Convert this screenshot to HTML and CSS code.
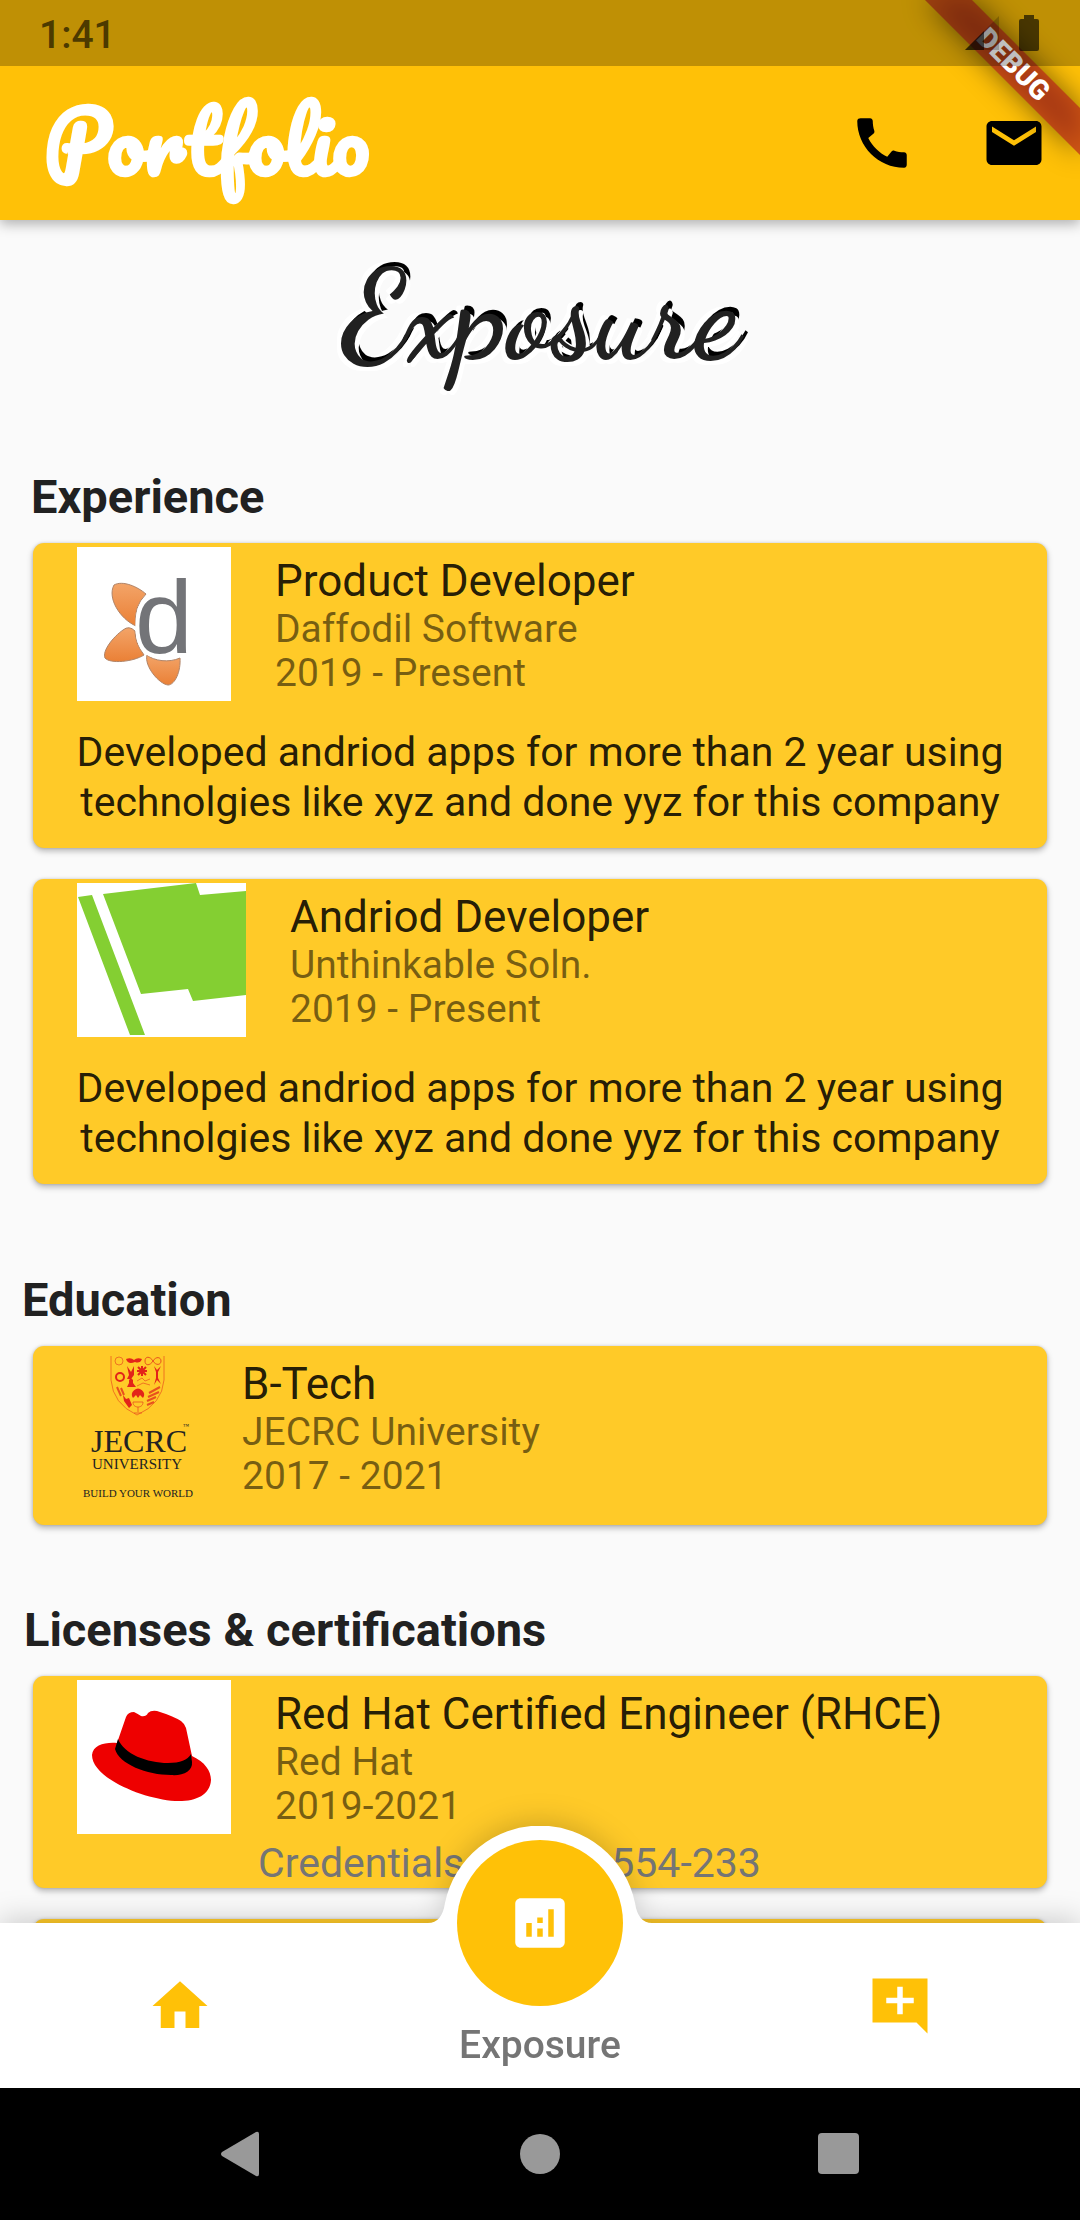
FILE: index.html
```html
<!DOCTYPE html>
<html lang="en">
<head>
<meta charset="utf-8">
<meta name="viewport" content="width=device-width, initial-scale=1">
<title>Portfolio</title>
<link rel="stylesheet" href="styles.css">
</head>
<body>
<div class="screen">
  <header class="top">
    <div class="status">
      <span class="clock">1:41</span>
      <div class="status-icons">
        <svg class="signal" viewBox="0 0 34 34" aria-hidden="true"><path d="M34 0v34H0z" fill="#000" fill-opacity=".2"/><path d="M19 15v19H0z" fill="#000" fill-opacity=".6"/></svg>
        <svg class="battery" viewBox="0 0 20 36" aria-hidden="true"><path d="M5 0h10v4h3q2 0 2 2v28q0 2-2 2H2q-2 0-2-2V6q0-2 2-2h3z" fill="#000" fill-opacity=".62"/></svg>
      </div>
    </div>
    <div class="appbar">
      <h1 class="brand">Portfolio</h1>
      <div class="actions">
        <button class="icon-button" type="button" aria-label="Call"><svg class="icon" viewBox="0 0 24 24"><path d="M20.01 15.38c-1.23 0-2.42-.2-3.53-.56-.35-.12-.74-.03-1.01.24l-1.57 1.97c-2.83-1.35-5.48-3.9-6.89-6.83l1.95-1.66c.27-.28.35-.67.24-1.02-.37-1.11-.56-2.3-.56-3.53 0-.54-.45-.99-.99-.99H4.19C3.65 3 3 3.24 3 3.99 3 13.28 10.73 21 20.01 21c.71 0 .99-.63.99-1.18v-3.45c0-.54-.45-.99-.99-.99z"/></svg></button>
        <button class="icon-button" type="button" aria-label="Mail"><svg class="icon" viewBox="0 0 24 24"><path d="M20 4H4c-1.1 0-2 .9-2 2v12c0 1.100.9 2 2 2h16c1.100 0 2-.9 2-2V6c0-1.100-.9-2-2-2zm0 4l-8 5-8-5V6l8 5 8-5v2z"/></svg></button>
      </div>
    </div>
    <svg class="debug" viewBox="0 0 220 220" aria-hidden="true">
      <path class="debug-shadow" d="M65 0h47L220 108v47z"/>
      <path d="M65 0h47L220 108v47z" fill="#b71c1c" fill-opacity=".63"/>
      <text class="debug-text" transform="rotate(45 154 64)" x="154" y="74" text-anchor="middle">DEBUG</text>
    </svg>
  </header>

  <main class="content">
    <h2 class="page-title">Exposure</h2>

    <section class="section">
      <h3 class="heading heading-experience">Experience</h3>
      <article class="card">
        <div class="media">
          <svg class="logo logo-square" viewBox="0 0 154 154" role="img" aria-label="Daffodil Software">
            <defs><linearGradient id="petal" x1="0" y1="0" x2="0" y2="1"><stop offset="0" stop-color="#f3a468"/><stop offset="1" stop-color="#ea8036"/></linearGradient></defs>
            <rect width="154" height="154" fill="#fff"/>
            <g fill="url(#petal)" stroke="#b08468">
              <path d="M37 38C46 33 61 40 69 47Q56 60 59 79C43 72 30 51 37 38z"/>
              <path d="M58 84Q52 78 46 83C36 90 25 104 28 111C33 117 56 115 67 108Q58 96 58 84z"/>
              <path d="M70 108C77 114 92 116 103 111C104 124 98 138 91 138C82 137 67 119 70 108z"/>
            </g>
            <text class="logo-d" x="58" y="106">d</text>
          </svg>
          <div class="details">
            <h4 class="role">Product Developer</h4>
            <p class="meta">Daffodil Software</p>
            <p class="meta">2019 - Present</p>
          </div>
        </div>
        <p class="description">Developed andriod apps for more than 2 year using technolgies like xyz and done yyz for this company</p>
      </article>
      <article class="card">
        <div class="media">
          <svg class="logo logo-wide" viewBox="0 0 169 154" role="img" aria-label="Unthinkable Solutions">
            <rect width="169" height="154" fill="#fff"/>
            <path d="M1 14l14-2 53 140H53zM26 11l93-11 4 12 46-4v104l-53 6-5-12-47 5z" fill="#84cf32"/>
          </svg>
          <div class="details">
            <h4 class="role">Andriod Developer</h4>
            <p class="meta">Unthinkable Soln.</p>
            <p class="meta">2019 - Present</p>
          </div>
        </div>
        <p class="description">Developed andriod apps for more than 2 year using technolgies like xyz and done yyz for this company</p>
      </article>
    </section>

    <section class="section">
      <h3 class="heading heading-education">Education</h3>
      <article class="card">
        <div class="media">
          <svg class="logo logo-narrow" viewBox="0 0 121 154" role="img" aria-label="JECRC University">
            <g fill="none" stroke="#e8501e">
              <path d="M34 6v24Q36 54 60 65Q85 54 87 30V6" stroke-opacity=".7"/>
              <circle cx="42" cy="11" r="4" stroke-opacity=".7"/>
              <path d="M76 11c-3-5-8-5-8 0s5 5 8 0 8-4 8 0-5 5-8 0z"/>
              <circle cx="43" cy="27" r="4" stroke-width="2" stroke="#e32419"/>
              <path d="M65 16v10M60 21h10M61 17l8 8M69 17l-8 8" stroke="#e32419" stroke-width="2"/>
              <path d="M60 31l5-3 3 3 5-2M60 36l6-3 7 2" stroke-opacity=".7"/>
              <path d="M56 52c0 4 3 5 5 5s5-1 5-5zM61 57v5M57 63h8" stroke-opacity=".8"/>
              <path d="M72 43l11-6M71 47l11-5M70 51l9-4M70 55l7-3M40 37l4 9M44 38l3 7" stroke-width="2"/>
            </g>
            <g fill="#e32419">
              <path d="M49 9q5-2 8 1 3-3 8-1-2 5-7 3-7 3-9-3zM50 16l4 6 3-6v9l-3 4h-4l2-4zM77 16l3 4 4-4-3 6v6l3 6-4-4-3 5 2-7v-6zM52 30l2-2 2 2v3l3 4h-9l2-4zM46 45l3 4 3-1 3 7-3 3-5-7z"/>
              <path d="M56 48a6 6 0 1 1 10 0l-3-3-2 3-2-3z"/>
            </g>
            <g class="crest-text">
              <text class="crest-name" x="62" y="102" text-anchor="middle">JECRC</text>
              <text class="crest-tm" x="106" y="78">™</text>
              <text class="crest-type" x="60" y="119" text-anchor="middle">UNIVERSITY</text>
              <text class="crest-motto" x="61" y="147" text-anchor="middle">BUILD YOUR WORLD</text>
            </g>
          </svg>
          <div class="details">
            <h4 class="role">B-Tech</h4>
            <p class="meta">JECRC University</p>
            <p class="meta">2017 - 2021</p>
          </div>
        </div>
      </article>
    </section>

    <section class="section">
      <h3 class="heading heading-licenses">Licenses &amp; certifications</h3>
      <article class="card card-license">
        <div class="media">
          <svg class="logo logo-square" viewBox="0 0 154 154" role="img" aria-label="Red Hat">
            <rect width="154" height="154" fill="#fff"/>
            <path d="M40 63L49 37Q51 32 57 32Q61 34 64 36Q69 37 71 33Q74 30 80 31Q96 36 104 41Q108 44 109 48L115 76C128 82 134 91 134 100C133 116 117 122 98 121C66 119 15 98 15 75C16 65 28 62 40 63z" fill="#e00"/>
            <path d="M41 59C47 74 70 83 91 83Q109 83 114 74L115 82C116 91 106 96 94 95C70 95 42 84 38 69z"/>
          </svg>
          <div class="details">
            <h4 class="role">Red Hat Certified Engineer (RHCE)</h4>
            <p class="meta">Red Hat</p>
            <p class="meta">2019-2021</p>
          </div>
        </div>
        <p class="credentials"><span>Credentials</span><span>554-233</span></p>
      </article>
      <article class="card card-license">
        <div class="media"><div class="logo logo-square logo-blank"></div></div>
      </article>
    </section>
  </main>

  <nav class="tabs" aria-label="Sections">
    <svg class="bump" viewBox="0 0 240 98" aria-hidden="true"><path d="M0 98v-1h8Q22 97 25 77A97 97 0 0 1 215 77Q218 97 232 97h8v1z" fill="#fff"/></svg>
    <button class="tab" type="button" aria-label="Home"><svg class="icon" viewBox="0 0 24 24"><path d="M10 20v-6h4v6h5v-8h3L12 3 2 12h3v8z"/></svg></button>
    <button class="tab tab-active" type="button" aria-current="page">
      <span class="tab-disc"><svg class="icon" viewBox="0 0 24 24"><path d="M19 3H5c-1.100 0-2 .9-2 2v14c0 1.100.9 2 2 2h14c1.100 0 2-.9 2-2V5c0-1.100-.9-2-2-2zM9 17H7v-5h2v5zm4 0h-2v-3h2v3zm0-5h-2v-2h2v2zm4 5h-2V7h2v10z"/></svg></span>
      <span class="tab-label">Exposure</span>
    </button>
    <button class="tab" type="button" aria-label="Add comment"><svg class="icon" viewBox="0 0 24 24"><path d="M22 2H2v16h16l4 4V2zm-5 9h-4v4h-2v-4H7V9h4V5h2v4h4v2z"/></svg></button>
  </nav>

  <footer class="system">
    <button class="system-button" type="button" aria-label="Back"><svg class="system-icon" viewBox="0 0 46 46"><path d="M39 1q3-1 3 2v40q0 3-3 2L5 25q-2-2 0-4z"/></svg></button>
    <button class="system-button" type="button" aria-label="Home screen"><svg class="system-icon" viewBox="0 0 46 46"><circle cx="23" cy="23" r="20"/></svg></button>
    <button class="system-button" type="button" aria-label="Recent apps"><svg class="system-icon" viewBox="0 0 46 46"><rect x="1" y="2" width="41" height="41" rx="4"/></svg></button>
  </footer>
</div>
</body>
</html>
```
FILE: styles.css
```css
* { box-sizing: border-box; }

body {
  margin: 0;
  background: #fafafa;
  color: #212121;
  font-family: Roboto, "Liberation Sans", sans-serif;
}

h1, h2, h3, h4, p { margin: 0; font-weight: 400; }

button {
  padding: 0;
  border: 0;
  background: none;
  color: inherit;
  font: inherit;
}

svg { display: block; }

.screen {
  display: flex;
  flex-direction: column;
  height: 100vh;
  overflow: hidden;
}

/* Top bars */
.top {
  position: relative;
  z-index: 2;
  flex: none;
  background: #ffc107;
  box-shadow: 0 4px 12px rgba(0, 0, 0, .3);
}

.status {
  position: relative;
  z-index: 2;
  display: flex;
  align-items: center;
  justify-content: space-between;
  height: 66px;
  padding: 0 41px 0 39px;
  background: rgba(0, 0, 0, .25);
}

.clock {
  padding-top: 4px;
  color: #4c3a00;
  font-size: 39px;
  font-weight: 500;
  line-height: 62px;
}

.status-icons { display: flex; align-items: center; gap: 20px; }
.signal { width: 34px; height: 34px; }
.battery { width: 20px; height: 36px; }

.appbar {
  display: flex;
  align-items: center;
  justify-content: space-between;
  height: 154px;
  padding: 0 33px 0 44px;
}

.brand {
  padding-bottom: 5px;
  color: #fff;
  font-family: Pacifico, Lato, sans-serif;
  font-size: 83px;
  font-weight: 700;
  line-height: 100px;
}

.actions { display: flex; gap: 66px; color: #000; }
.icon-button, .icon { display: block; width: 66px; height: 66px; }
.icon, .system-icon { fill: currentColor; }

.debug {
  position: absolute;
  z-index: 1;
  top: 0;
  right: 0;
  width: 220px;
  height: 220px;
}

.debug-shadow { fill: #000; fill-opacity: .5; filter: blur(14px); }
.debug-text { fill: #fff; font-size: 28px; font-weight: 900; }

/* Scrolling content */
.content { flex: 1; min-height: 0; overflow: hidden; }

.page-title {
  padding: 47px 0 103px;
  font-family: "Dancing Script", "Liberation Serif", serif;
  font-size: 124px;
  font-weight: 700;
  line-height: 100px;
  text-align: center;
  text-shadow: -4px 4px 0 #fff, 4px 4px 0 #fff, 4px -4px 0 #000, -4px -4px 0 #fff;
}

.section { display: flex; flex-direction: column; gap: 31px; padding: 0 33px; }
.section + .section { padding-top: 78px; }
.section:nth-of-type(2) { padding-top: 89px; }

.heading {
  margin: 0 0 -12px;
  font-size: 47px;
  font-weight: 700;
  line-height: 54px;
}

.heading-experience { margin-left: -2px; }
.heading-education { margin-left: -11px; }
.heading-licenses { margin-left: -9px; }

.card {
  padding: 4px 33px 21px;
  border-radius: 11px;
  background: #ffca28;
  color: rgba(0, 0, 0, .87);
  box-shadow: 0 3px 6px rgba(0, 0, 0, .28), 0 0 3px rgba(0, 0, 0, .15);
}

.card-license { padding-bottom: 0; }
.media { display: flex; gap: 44px; padding-left: 11px; }
.logo { flex: none; height: 154px; }
.logo-square { width: 154px; }
.logo-wide { width: 169px; }
.logo-narrow { width: 121px; }
.logo-blank { background: #fff; }
.details { padding-top: 8px; }
.role { font-size: 44px; line-height: 52px; }
.meta { color: rgba(0, 0, 0, .54); font-size: 39px; line-height: 44px; }

.description {
  padding-top: 26px;
  font-size: 41px;
  line-height: 50px;
  text-align: center;
}

.credentials {
  display: flex;
  gap: 147px;
  padding: 4px 0 0 192px;
  color: #757575;
  font-size: 41px;
  line-height: 50px;
}

.logo-d {
  fill: #737478;
  stroke: #fff;
  stroke-width: 8px;
  paint-order: stroke;
  font-family: "Liberation Sans", sans-serif;
  font-size: 104px;
}

.crest-text { fill: #222; font-family: "Liberation Serif", serif; }
.crest-name { font-size: 32px; }
.crest-tm { font-size: 6px; }
.crest-type { font-size: 15px; }
.crest-motto { font-size: 11px; }

/* Bottom navigation */
.tabs {
  position: relative;
  z-index: 1;
  flex: none;
  display: grid;
  grid-template-columns: repeat(3, 1fr);
  height: 165px;
  background: #fff;
  color: #ffc107;
  filter: drop-shadow(0 -4px 14px rgba(0, 0, 0, .18));
}

.bump {
  position: absolute;
  bottom: 100%;
  left: 50%;
  width: 240px;
  height: 98px;
  margin: 0 0 -1px -120px;
}

.tab { display: grid; place-items: center; }
.tab-active { position: relative; align-items: end; }

.tab-disc {
  position: absolute;
  top: -83px;
  left: 50%;
  display: grid;
  place-items: center;
  width: 166px;
  height: 166px;
  margin-left: -83px;
  border-radius: 50%;
  background: #ffc107;
  color: #fff;
}

.tab-label {
  padding-bottom: 21px;
  color: #757575;
  font-size: 39px;
  font-weight: 500;
  line-height: 44px;
}

/* Device navigation */
.system {
  position: relative;
  z-index: 2;
  flex: none;
  display: grid;
  grid-template-columns: repeat(3, 1fr);
  height: 132px;
  padding: 0 90px;
  background: #000;
  color: #999;
}

.system-button { display: grid; place-items: center; }
.system-icon { width: 46px; height: 46px; }
```
